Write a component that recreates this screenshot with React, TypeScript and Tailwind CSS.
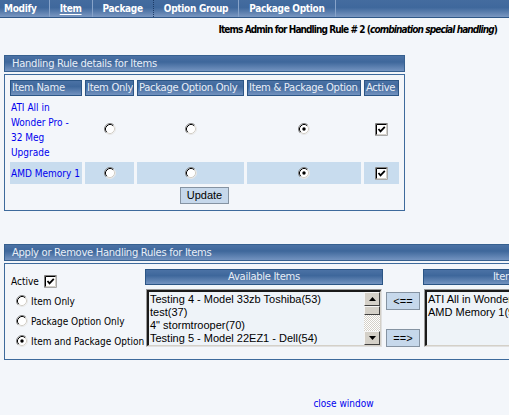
import React from "react";

function Radio({ checked }: { checked?: boolean }) {
  return (
    <svg width="12" height="12" viewBox="0 0 12 12" className="block shrink-0">
      <circle cx="6" cy="6" r="5" fill="#ffffff" />
      <path d="M2.11 9.89A5.5 5.5 0 0 1 9.89 2.11" fill="none" stroke="#808080" strokeWidth="1" />
      <path d="M9.89 2.11A5.5 5.5 0 0 1 2.11 9.89" fill="none" stroke="#e8e8e8" strokeWidth="1" />
      <path d="M2.82 9.18A4.5 4.5 0 0 1 9.18 2.82" fill="none" stroke="#000000" strokeWidth="1" />
      <path d="M9.18 2.82A4.5 4.5 0 0 1 2.82 9.18" fill="none" stroke="#d4d0c8" strokeWidth="1" />
      {checked && <circle cx="6" cy="6" r="1.7" fill="#000000" />}
    </svg>
  );
}

function Check() {
  return (
    <svg width="13" height="13" viewBox="0 0 13 13" className="block shrink-0">
      <rect x="0" y="0" width="13" height="13" fill="#ffffff" />
      <path d="M0.5 12.5H12.5V0.5" fill="none" stroke="#a8a8a8" strokeWidth="1" />
      <path d="M1.5 11.5H11.5V1.5" fill="none" stroke="#d4d0c8" strokeWidth="1" />
      <path d="M0.5 12.5V0.5H12.5" fill="none" stroke="#808080" strokeWidth="1" />
      <path d="M1.5 11.5V1.5H11.5" fill="none" stroke="#000000" strokeWidth="1" />
      <path d="M3.5 6 L5.5 8.3 L9.8 3.8" fill="none" stroke="#000000" strokeWidth="1.8" />
    </svg>
  );
}

function ScrollBtn({ up }: { up?: boolean }) {
  return (
    <div className="h-[14px] w-[16px] bg-[#d4d0c8] border border-t-[#f4f4f4] border-l-[#f4f4f4] border-r-[#404040] border-b-[#404040] flex items-center justify-center">
      <svg width="7" height="4" viewBox="0 0 7 4" className="block">
        {up ? <polygon points="3.5,0 7,4 0,4" fill="#000" /> : <polygon points="0,0 7,0 3.5,4" fill="#000" />}
      </svg>
    </div>
  );
}

const hdr =
  "bg-[linear-gradient(#4b72a5_0%,#3e679b_40%,#7393c0_100%)] text-[#e8eef7] font-['DejaVu_Sans',sans-serif] tracking-[-0.3px] whitespace-nowrap overflow-hidden";

function HeadCell({ children }: { children: React.ReactNode }) {
  return <div className={`${hdr} h-[16px] border border-[#2b5585] leading-[14px] pl-[1px]`}>{children}</div>;
}

function ListBox({ items, scroll }: { items: string[]; scroll?: boolean }) {
  return (
    <div className="mx-[1px] mt-[4px] h-[58px] border border-t-[#9a9a9a] border-l-[#9a9a9a] border-r-[#e0e0e0] border-b-[#e0e0e0]">
      <div className="h-full flex border-t-2 border-l-2 border-t-[#1a1a1a] border-l-[#1a1a1a] border-r border-b border-r-[#d4d0c8] border-b-[#d4d0c8] bg-[#eef3f8]">
        <div className="flex-1 overflow-hidden pl-[1px] pt-[1px] font-['Liberation_Sans',Arial,sans-serif] text-[11px] leading-[13px] text-black whitespace-nowrap">
          {items.map((t) => (
            <div key={t}>{t}</div>
          ))}
        </div>
        {scroll && (
          <div className="w-[16px] flex flex-col">
            <ScrollBtn up />
            <div className="h-[9px] bg-[#d4d0c8] border border-t-[#f4f4f4] border-l-[#f4f4f4] border-r-[#404040] border-b-[#404040]" />
            <div className="flex-1 bg-[repeating-conic-gradient(#d4d0c8_0_25%,#ffffff_0_50%)] bg-[length:2px_2px]" />
            <ScrollBtn />
          </div>
        )}
      </div>
    </div>
  );
}

const btn =
  "bg-[#c6d8eb] border border-[#8593a2] font-['Liberation_Sans',Arial,sans-serif] text-[11px] text-black leading-none flex items-center justify-center";

export default function App() {
  const tabs = ["Modify", "Item", "Package", "Option Group", "Package Option"];
  return (
    <div className="w-[509px] h-[415px] overflow-hidden bg-[#f3f6fa] font-['DejaVu_Sans_Condensed','DejaVu_Sans',sans-serif] text-[10px] text-black">
      {/* Tab bar */}
      <div className="h-[18px] w-full flex bg-[linear-gradient(#446c9f_0%,#3f689c_45%,#7a97c1_100%)] border-b border-[#2f5787]">
        {tabs.map((t, i) => (
          <div
            key={t}
            className={`h-full flex items-center font-bold text-white whitespace-nowrap tracking-[-0.3px] pr-[10px] ${i === 0 ? "pl-[4px] pr-[12px]" : "pl-[10px]"} ${
              i === 2 ? "border-r border-dotted border-[#1d3b66]" : "border-r border-[#87a3c9]"
            }`}
          >
            <span className={i === 1 ? "underline underline-offset-2" : ""}>{t}</span>
          </div>
        ))}
      </div>

      {/* Title */}
      <div className="mt-[4px] h-[16px] leading-[16px] text-right pr-[12px] font-bold whitespace-nowrap tracking-[-0.9px]">
        Items Admin for Handling Rule # 2 (<i>combination special handling</i>)
      </div>

      {/* Section 1 */}
      <div className="ml-[4px] mt-[17px] w-[401px]">
        <div className={`${hdr} h-[17px] border border-[#36608f] leading-[15px] pl-[7px]`}>Handling Rule details for Items</div>
        <div className="mt-[2px] border border-[#3d6a9c] px-[5px] pt-[5px] pb-[6px]">
          <div className="grid grid-cols-[72px_49px_107px_114px_35px] gap-x-[3px] gap-y-[2px]">
            <HeadCell>Item Name</HeadCell>
            <HeadCell>Item Only</HeadCell>
            <HeadCell>Package Option Only</HeadCell>
            <HeadCell>Item &amp; Package Option</HeadCell>
            <HeadCell>Active</HeadCell>

            <div className="h-[62px] flex items-center pl-[1px] pt-[2px] text-[#0000ee] leading-[15px]">
              <div>
                ATI All in
                <br />
                Wonder Pro -
                <br />
                32 Meg
                <br />
                Upgrade
              </div>
            </div>
            <div className="flex items-center justify-center">
              <Radio />
            </div>
            <div className="flex items-center justify-center">
              <Radio />
            </div>
            <div className="flex items-center justify-center">
              <Radio checked />
            </div>
            <div className="flex items-center justify-center">
              <Check />
            </div>

            <div className="h-[22px] bg-[#c8dcee] flex items-center pl-[1px] text-[#0000ee] whitespace-nowrap">AMD Memory 1</div>
            <div className="bg-[#c8dcee] flex items-center justify-center">
              <Radio />
            </div>
            <div className="bg-[#c8dcee] flex items-center justify-center">
              <Radio />
            </div>
            <div className="bg-[#c8dcee] flex items-center justify-center">
              <Radio checked />
            </div>
            <div className="bg-[#c8dcee] flex items-center justify-center">
              <Check />
            </div>
          </div>
          <div className="flex justify-center mt-[3px]">
            <button className={`${btn} w-[49px] h-[17px]`}>Update</button>
          </div>
        </div>
      </div>

      {/* Section 2 */}
      <div className="ml-[4px] mt-[33px] w-[679px]">
        <div className={`${hdr} h-[17px] border border-[#36608f] leading-[15px] pl-[7px]`}>Apply or Remove Handling Rules for Items</div>
        <div className="mt-[2px] border border-[#3d6a9c] flex pt-[5px] pb-[8px]">
          <div className="w-[140px] pt-[6px]">
            <div className="h-[13px] flex items-center pl-[6px] gap-[5px]">
              <span>Active</span>
              <Check />
            </div>
            <div className="mt-[3px] flex flex-col pl-[11px]">
              {[
                ["Item Only", false],
                ["Package Option Only", false],
                ["Item and Package Option", true],
              ].map(([l, c]) => (
                <div key={l as string} className="h-[20px] flex items-center gap-[3px] whitespace-nowrap">
                  <Radio checked={c as boolean} />
                  <span className="pt-[1px]">{l as string}</span>
                </div>
              ))}
            </div>
          </div>

          <div className="w-[238px]">
            <div className={`${hdr} h-[16px] border border-[#2b5585] leading-[14px] text-center`}>Available Items</div>
            <ListBox
              scroll
              items={["Testing 4 - Model 33zb Toshiba(53)", "test(37)", '4" stormtrooper(70)', "Testing 5 - Model 22EZ1 - Dell(54)"]}
            />
          </div>

          <div className="ml-[3px] w-[34px] pt-[23px] flex flex-col">
            <button className={`${btn} h-[18px] w-[34px]`}>&lt;==</button>
            <button className={`${btn} h-[18px] w-[34px] mt-[19px]`}>==&gt;</button>
          </div>

          <div className="ml-[3px] w-[238px]">
            <div className={`${hdr} h-[16px] border border-[#2b5585] leading-[14px] text-center`}>Items using this Rule</div>
            <ListBox items={["ATI All in Wonder Pro - 32 Meg Upgrade(93)", "AMD Memory 1(94)"]} />
          </div>
        </div>
      </div>

      {/* Close window */}
      <div className="w-[687px] mt-[37px] text-center leading-[14px]">
        <span className="text-[#0000ee]">close window</span>
      </div>
    </div>
  );
}
